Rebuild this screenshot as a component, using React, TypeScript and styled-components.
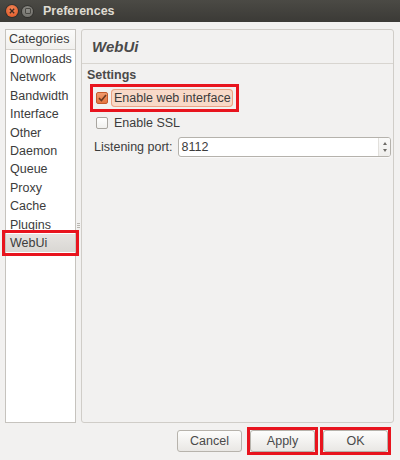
import styled, { createGlobalStyle } from "styled-components";

const GlobalStyle = createGlobalStyle`
  html, body {
    margin: 0;
    padding: 0;
    background: #f2f1f0;
  }
  body {
    font-family: "Liberation Sans", Arial, sans-serif;
    font-size: 12.5px;
    color: #3c3c3c;
  }
`;

const MARK = "#e8141e";

const Window = styled.div`
  width: 400px;
  height: 460px;
  display: flex;
  flex-direction: column;
  background: #f2f1f0;
  overflow: hidden;
`;

const TitleBar = styled.div`
  height: 22px;
  flex: none;
  display: flex;
  align-items: center;
  padding-left: 6px;
  background: linear-gradient(#4b4a45, #3b3a36);
`;

const CircleButton = styled.div<{ $kind: "close" | "min" }>`
  width: ${({ $kind }) => ($kind === "close" ? 12 : 11)}px;
  height: ${({ $kind }) => ($kind === "close" ? 12 : 11)}px;
  margin-right: ${({ $kind }) => ($kind === "close" ? 4 : 10)}px;
  border-radius: 50%;
  display: flex;
  align-items: center;
  justify-content: center;
  background: ${({ $kind }) =>
    $kind === "close"
      ? "radial-gradient(circle at 50% 35%, #f4885a, #dd5220)"
      : "radial-gradient(circle at 50% 35%, #8e8d88, #6c6b66)"};
  box-shadow: 0 0 0 1px rgba(0, 0, 0, 0.25);
`;

const MinGlyph = styled.span`
  width: 4px;
  height: 4px;
  border: 1px solid #4a4944;
  border-radius: 1px;
`;

const Title = styled.span`
  font-weight: bold;
  font-size: 12.5px;
  color: #dfdbd2;
`;

const Content = styled.div`
  flex: none;
  height: 394px;
  display: flex;
  padding: 7px 6px 0 5px;
`;

const Sidebar = styled.div`
  width: 71px;
  box-sizing: border-box;
  border: 1px solid #c6c3be;
  background: #ffffff;
  display: flex;
  flex-direction: column;
`;

const SidebarHeader = styled.div`
  height: 19px;
  line-height: 19px;
  padding-left: 3px;
  background: linear-gradient(#fbfbfa, #f1f0ee);
  border-bottom: 1px solid #d3d0cb;
`;

const Item = styled.div<{ $selected?: boolean }>`
  height: 18.4px;
  line-height: 18.4px;
  padding-left: 4px;
  background: ${({ $selected }) => ($selected ? "linear-gradient(#e6e4e1, #d9d7d3)" : "transparent")};
  outline: ${({ $selected }) => ($selected ? `3px solid ${MARK}` : "none")};
  outline-offset: 1px;
`;

const Sash = styled.div`
  width: 5px;
  display: flex;
  align-items: center;
  justify-content: center;
`;

const Grip = styled.div`
  width: 3px;
  height: 6px;
  margin-right: 1px;
  background: repeating-linear-gradient(#b9b6b0 0 1px, transparent 1px 2px);
`;

const Panel = styled.div`
  flex: 1;
  box-sizing: border-box;
  border: 1px solid #d0cdc8;
  border-radius: 3px;
  display: flex;
  flex-direction: column;
`;

const PanelHeader = styled.div`
  height: 33px;
  flex: none;
  display: flex;
  align-items: center;
  padding-left: 10px;
  border-bottom: 1px solid #d8d5d0;
  font-size: 15px;
  font-weight: bold;
  font-style: italic;
  color: #4a4a4a;
`;

const Section = styled.div`
  padding-left: 5px;
  display: flex;
  flex-direction: column;
`;

const SectionTitle = styled.div`
  height: 22px;
  line-height: 23px;
  font-weight: bold;
  color: #4a4a4a;
`;

const OptionList = styled.div`
  display: flex;
  flex-direction: column;
  align-items: flex-start;
  padding-left: 6px;
  margin-top: 1px;
`;

const Option = styled.div<{ $marked?: boolean }>`
  display: flex;
  align-items: center;
  height: 22px;
  padding: 0 3px 0 3px;
  outline: ${({ $marked }) => ($marked ? `3px solid ${MARK}` : "none")};
  & + & {
    margin-top: 3px;
  }
`;

const Checkbox = styled.span<{ $checked?: boolean }>`
  width: 12px;
  height: 12px;
  box-sizing: border-box;
  border-radius: 2px;
  display: flex;
  align-items: center;
  justify-content: center;
  border: 1px solid ${({ $checked }) => ($checked ? "#c55a2c" : "#a9a6a0")};
  background: ${({ $checked }) =>
    $checked ? "linear-gradient(#f19a6c, #e4743f)" : "linear-gradient(#ffffff, #f1f0ee)"};
`;

const OptionLabel = styled.span<{ $focused?: boolean }>`
  margin-left: 3px;
  height: 18px;
  line-height: 18px;
  padding: 0 2px 0 3px;
  border-radius: 4px;
  background: ${({ $focused }) => ($focused ? "#f8d9c8" : "transparent")};
  box-shadow: ${({ $focused }) => ($focused ? "inset 0 0 0 1px #eba385" : "none")};
`;

const PortRow = styled.div`
  display: flex;
  align-items: center;
  align-self: stretch;
  height: 22px;
  margin-top: 2px;
  padding-left: 1px;
  margin-right: 2px;
  gap: 5px;
`;

const SpinBox = styled.div`
  flex: 1;
  height: 20px;
  box-sizing: border-box;
  display: flex;
  border: 1px solid #b5b2ac;
  border-radius: 3px;
  background: #ffffff;
  box-shadow: 0 1px 0 rgba(255, 255, 255, 0.6);
`;

const SpinValue = styled.div`
  flex: 1;
  padding-left: 3px;
  line-height: 18px;
`;

const Stepper = styled.div`
  width: 11px;
  border-left: 1px solid #e2e0dc;
  display: flex;
  flex-direction: column;
  align-items: center;
  justify-content: center;
  gap: 4px;
  background: linear-gradient(#fafaf9, #efeeec);
  border-radius: 0 2px 2px 0;
`;

const Arrow = styled.span<{ $up?: boolean }>`
  width: 0;
  height: 0;
  border-left: 2.5px solid transparent;
  border-right: 2.5px solid transparent;
  ${({ $up }) => ($up ? "border-bottom: 3px solid #6e6c68;" : "border-top: 3px solid #6e6c68;")}
`;

const ButtonRow = styled.div`
  display: flex;
  justify-content: flex-end;
  gap: 8px;
  padding: 7px 12px 0 0;
`;

const MarkFrame = styled.span<{ $marked?: boolean }>`
  display: flex;
  outline: ${({ $marked }) => ($marked ? `3px solid ${MARK}` : "none")};
`;

const Button = styled.button`
  width: 65px;
  height: 22px;
  padding: 0;
  font-family: inherit;
  font-size: 12.5px;
  color: #4a4a4a;
  border: 1px solid #b7b3ac;
  border-radius: 3px;
  background: linear-gradient(#fdfdfc, #e9e7e4);
  outline: none;
`;

const categories = [
  "Downloads",
  "Network",
  "Bandwidth",
  "Interface",
  "Other",
  "Daemon",
  "Queue",
  "Proxy",
  "Cache",
  "Plugins",
  "WebUi",
];

const CheckMark = () => (
  <svg width="9" height="8" viewBox="0 0 9 8">
    <path d="M1 4.2 L3.4 6.5 L8 1" fill="none" stroke="#6b3a22" strokeWidth="1.6" />
  </svg>
);

const CloseGlyph = () => (
  <svg width="6" height="6" viewBox="0 0 6 6">
    <path d="M0.8 0.8 L5.2 5.2 M5.2 0.8 L0.8 5.2" stroke="#3a2a22" strokeWidth="1.3" />
  </svg>
);

const App = () => {
  return (
    <Window>
      <GlobalStyle />
      <TitleBar>
        <CircleButton $kind="close">
          <CloseGlyph />
        </CircleButton>
        <CircleButton $kind="min">
          <MinGlyph />
        </CircleButton>
        <Title>Preferences</Title>
      </TitleBar>
      <Content>
        <Sidebar>
          <SidebarHeader>Categories</SidebarHeader>
          {categories.map((c) => (
            <Item key={c} $selected={c === "WebUi"}>
              {c}
            </Item>
          ))}
        </Sidebar>
        <Sash>
          <Grip />
        </Sash>
        <Panel>
          <PanelHeader>WebUi</PanelHeader>
          <Section>
            <SectionTitle>Settings</SectionTitle>
            <OptionList>
              <Option $marked>
                <Checkbox $checked>
                  <CheckMark />
                </Checkbox>
                <OptionLabel $focused>Enable web interface</OptionLabel>
              </Option>
              <Option>
                <Checkbox />
                <OptionLabel>Enable SSL</OptionLabel>
              </Option>
              <PortRow>
                <span>Listening port:</span>
                <SpinBox>
                  <SpinValue>8112</SpinValue>
                  <Stepper>
                    <Arrow $up />
                    <Arrow />
                  </Stepper>
                </SpinBox>
              </PortRow>
            </OptionList>
          </Section>
        </Panel>
      </Content>
      <ButtonRow>
        <MarkFrame>
          <Button>Cancel</Button>
        </MarkFrame>
        <MarkFrame $marked>
          <Button>Apply</Button>
        </MarkFrame>
        <MarkFrame $marked>
          <Button>OK</Button>
        </MarkFrame>
      </ButtonRow>
    </Window>
  );
};

export default App;
